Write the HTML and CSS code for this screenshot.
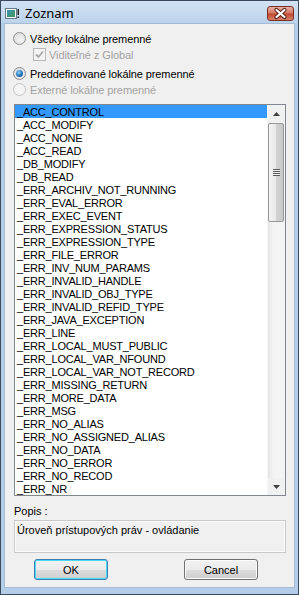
FILE: index.html
```html
<!DOCTYPE html>
<html lang="sk">
<head>
  <meta charset="UTF-8">
  <meta name="viewport" content="width=device-width, initial-scale=1">
  <title>Zoznam</title>
  <link rel="stylesheet" href="styles.css">
</head>
<body>

<div class="window">

  <!-- Title bar -->
  <div class="titlebar">
    <svg class="app-icon" width="15" height="12" viewBox="0 0 15 12">
      <defs>
        <linearGradient id="ico" x1="0" y1="0" x2="1" y2="1">
          <stop offset="0" stop-color="#3f8fb8"/>
          <stop offset="1" stop-color="#3e9a55"/>
        </linearGradient>
      </defs>
      <rect x="0.5" y="0.5" width="11" height="10" fill="#fff" stroke="#6b7a8a"/>
      <rect x="2" y="2" width="8" height="7" fill="url(#ico)"/>
      <rect x="12.5" y="1" width="1.5" height="6" fill="#222"/>
      <rect x="12.5" y="8.5" width="1.5" height="1.5" fill="#222"/>
    </svg>
    <span class="title">Zoznam</span>
    <div class="close-btn">
      <svg width="27" height="15" viewBox="0 0 27 15">
        <path d="M9.5 4 L17.5 11 M17.5 4 L9.5 11" stroke="#5a2118" stroke-width="4.2" stroke-linecap="round"/>
        <path d="M9.5 4 L17.5 11 M17.5 4 L9.5 11" stroke="#fff" stroke-width="2.2" stroke-linecap="round"/>
      </svg>
    </div>
  </div>

  <!-- Client area -->
  <div class="client">
    <div class="option opt-1"><span class="radio"></span>Všetky lokálne premenné</div>
    <div class="option opt-sub disabled"><span class="checkbox"><svg width="11" height="11" viewBox="0 0 11 11"><path d="M2 5.5 L4.5 8 L9 2.5" fill="none" stroke="#a8a8a8" stroke-width="1.8"/></svg></span>Viditeľné z Global</div>
    <div class="option opt-3"><span class="radio checked"></span>Preddefinované lokálne premenné</div>
    <div class="option opt-sub2 disabled"><span class="radio"></span>Externé lokálne premenné</div>

    <div class="listbox">
      <ul class="items">
        <li class="selected">_ACC_CONTROL</li>
        <li>_ACC_MODIFY</li>
        <li>_ACC_NONE</li>
        <li>_ACC_READ</li>
        <li>_DB_MODIFY</li>
        <li>_DB_READ</li>
        <li>_ERR_ARCHIV_NOT_RUNNING</li>
        <li>_ERR_EVAL_ERROR</li>
        <li>_ERR_EXEC_EVENT</li>
        <li>_ERR_EXPRESSION_STATUS</li>
        <li>_ERR_EXPRESSION_TYPE</li>
        <li>_ERR_FILE_ERROR</li>
        <li>_ERR_INV_NUM_PARAMS</li>
        <li>_ERR_INVALID_HANDLE</li>
        <li>_ERR_INVALID_OBJ_TYPE</li>
        <li>_ERR_INVALID_REFID_TYPE</li>
        <li>_ERR_JAVA_EXCEPTION</li>
        <li>_ERR_LINE</li>
        <li>_ERR_LOCAL_MUST_PUBLIC</li>
        <li>_ERR_LOCAL_VAR_NFOUND</li>
        <li>_ERR_LOCAL_VAR_NOT_RECORD</li>
        <li>_ERR_MISSING_RETURN</li>
        <li>_ERR_MORE_DATA</li>
        <li>_ERR_MSG</li>
        <li>_ERR_NO_ALIAS</li>
        <li>_ERR_NO_ASSIGNED_ALIAS</li>
        <li>_ERR_NO_DATA</li>
        <li>_ERR_NO_ERROR</li>
        <li>_ERR_NO_RECOD</li>
        <li>_ERR_NR</li>
      </ul>
      <div class="scrollbar">
        <div class="sb-arrow"><svg width="7" height="4" viewBox="0 0 7 4"><path d="M0 4 L3.5 0 L7 4 Z" fill="#404040"/></svg></div>
        <div class="sb-track">
          <div class="sb-thumb"><span class="grip"></span></div>
        </div>
        <div class="sb-arrow"><svg width="7" height="4" viewBox="0 0 7 4"><path d="M0 0 L7 0 L3.5 4 Z" fill="#404040"/></svg></div>
      </div>
    </div>

    <div class="caption">Popis :</div>
    <div class="desc">Úroveň prístupových práv - ovládanie</div>

    <div class="buttons">
      <button class="btn btn-default">OK</button>
      <button class="btn">Cancel</button>
    </div>
  </div>

</div>

</body>
</html>
```

FILE: styles.css
```css
body {
  margin: 0;
  font-family: 'Liberation Sans', Arial, sans-serif;
  font-size: 11px;
  color: #000;
  background: #fff;
}

.window {
  width: 299px;
  height: 595px;
  box-sizing: border-box;
  border: 1px solid #3a4a5c;
  background: #b4cde8;
  display: flex;
  flex-direction: column;
}

/* Title bar */
.titlebar {
  height: 22px;
  display: flex;
  align-items: center;
  background: linear-gradient(#d3e2f3, #bcd3eb);
}

.app-icon {
  margin-left: 4px;
  margin-top: 3px;
}

.title {
  margin-left: 5px;
  margin-top: 1px;
  font-family: 'Noto Sans', 'Open Sans', sans-serif;
  font-size: 13px;
  color: #000;
}

.close-btn {
  margin-left: auto;
  margin-right: 4px;
  margin-top: 2px;
  width: 27px;
  height: 15px;
  box-sizing: border-box;
  border: 1px solid #7b2f22;
  border-radius: 3px;
  background: linear-gradient(#e8b1a4, #d57a66 45%, #c24a31 55%, #d9836c);
  display: flex;
  align-items: center;
  justify-content: center;
}

.close-btn svg {
  margin: -1px;
}

/* Client area */
.client {
  flex: 1;
  margin: 0 3px 6px 3px;
  background: #f0f0f0;
  border: 1px solid #a4bcd6;
  padding: 8px 8px 0 8px;
  display: flex;
  flex-direction: column;
}

.option {
  height: 13px;
  display: flex;
  align-items: center;
  white-space: nowrap;
  letter-spacing: -0.1px;
}

.option.disabled {
  color: #a3a3a3;
}

.opt-sub {
  margin-top: 3px;
  padding-left: 20px;
}

.opt-3 {
  margin-top: 6px;
}

.opt-sub2 {
  margin-top: 3px;
}

.radio {
  width: 11px;
  height: 11px;
  border-radius: 50%;
  border: 1px solid #8d8d8d;
  background: radial-gradient(circle at 60% 60%, #f4f4f4, #d6d6d6);
  margin-right: 4px;
  flex: none;
  position: relative;
}

.radio.checked::after {
  content: "";
  position: absolute;
  left: 2px;
  top: 2px;
  width: 7px;
  height: 7px;
  border-radius: 50%;
  background: radial-gradient(circle at 40% 35%, #8fd2fa, #1a6bb5 60%, #0d4d8c);
}

.disabled .radio {
  border-color: #c4c4c4;
  background: #f4f4f4;
}

.checkbox {
  width: 11px;
  height: 11px;
  border: 1px solid #b8b8b8;
  background: #f4f4f4;
  margin-right: 3px;
  flex: none;
  display: flex;
}

/* List box */
.listbox {
  margin-top: 8px;
  margin-left: 1px;
  height: 390px;
  border: 1px solid #828790;
  background: #fff;
  display: flex;
}

.items {
  flex: 1;
  margin: 0;
  padding: 0;
  list-style: none;
  overflow: hidden;
}

.items li {
  height: 13px;
  line-height: 14px;
  padding-left: 2px;
  white-space: nowrap;
  letter-spacing: -0.2px;
}

.items li.selected {
  background: #3399ff;
}

.scrollbar {
  width: 17px;
  background: #f1f1f1;
  border-left: 1px solid #f7f7f7;
  display: flex;
  flex-direction: column;
}

.sb-arrow {
  height: 17px;
  display: flex;
  align-items: center;
  justify-content: center;
}

.sb-track {
  flex: 1;
  background: linear-gradient(90deg, #e4e4e4, #f4f4f4 30%, #f4f4f4);
}

.sb-thumb {
  height: 99px;
  margin: 1px 1px 0 0;
  box-sizing: border-box;
  border: 1px solid #979797;
  border-radius: 2px;
  background: linear-gradient(90deg, #f3f3f3, #e8e8e8 50%, #d3d3d3 51%, #c8c8c8);
  display: flex;
  align-items: center;
  justify-content: center;
}

.grip {
  width: 7px;
  height: 7px;
  background: repeating-linear-gradient(#5a5a5a 0 1px, #eeeeee 1px 2px);
}

/* Description */
.caption {
  margin-top: 8px;
  margin-left: 1px;
  height: 13px;
  line-height: 14px;
}

.desc {
  margin-top: 3px;
  margin-left: 1px;
  height: 26px;
  border: 1px solid #c9c9c9;
  box-shadow: inset 0 0 0 1px #fbfbfb;
  padding: 3px 2px 2px 2px;
}

/* Buttons */
.buttons {
  display: flex;
  margin-top: 6px;
  padding-left: 21px;
}

.btn {
  width: 74px;
  height: 21px;
  padding: 0;
  font-family: 'Liberation Sans', Arial, sans-serif;
  font-size: 11px;
  color: #000;
  border: 1px solid #707070;
  border-radius: 3px;
  background: linear-gradient(#f2f2f2, #ebebeb 50%, #dddddd 51%, #cfcfcf);
  box-shadow: inset 0 0 0 1px #fcfcfc;
}

.btn + .btn {
  margin-left: 76px;
}

.btn-default {
  border-color: #3c7fb1;
  box-shadow: inset 0 0 0 1px #48d8fb;
}
```
